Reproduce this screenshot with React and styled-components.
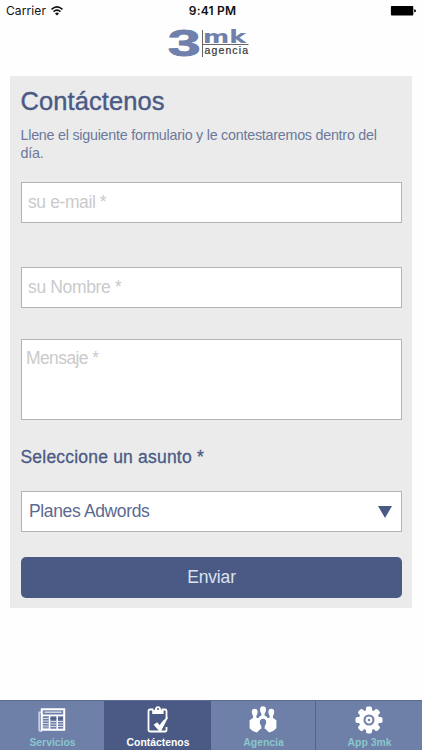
import React from "react";
import styled, { createGlobalStyle } from "styled-components";

const GlobalStyle = createGlobalStyle`
    * {
        box-sizing: border-box;
    }
    body {
        margin: 0;
        background: #fff;
        font-family: "Liberation Sans", Arial, sans-serif;
    }
`;

const Screen = styled.div`
    display: flex;
    flex-direction: column;
    width: 422px;
    height: 750px;
    overflow: hidden;
    background: #fefefe;
`;

const StatusBar = styled.div`
    display: grid;
    grid-template-columns: 1fr auto 1fr;
    align-items: center;
    height: 21px;
    padding: 0 5px 0 6px;
    font-family: Inter, sans-serif;
    font-size: 12px;
    color: #111;
`;

const Carrier = styled.div`
    display: flex;
    align-items: center;
    gap: 5px;
    letter-spacing: 0.1px;
`;

const Time = styled.div`
    padding-left: 2px;
    font-weight: 600;
    letter-spacing: 0.2px;
`;

const Battery = styled.svg`
    justify-self: end;
`;

const Header = styled.header`
    display: flex;
    justify-content: center;
    height: 55px;
    padding: 1px 4px 0 0;
`;

const Form = styled.form`
    display: flex;
    flex-direction: column;
    width: 402px;
    height: 532px;
    margin-left: 10px;
    padding: 0 10px 0 11px;
    background: #ebebeb;
`;

const Title = styled.h1`
    margin: 10px 0 0 -0.5px;
    font-size: 25.5px;
    line-height: 30px;
    font-weight: 400;
    letter-spacing: 0.08px;
    color: #4a5a85;
    -webkit-text-stroke: 0.4px #4a5a85;
`;

const Intro = styled.p`
    margin: 10px 0 20px -0.5px;
    font-size: 14.3px;
    line-height: 18px;
    letter-spacing: -0.24px;
    color: #6b799b;
`;

const field = `
    display: block;
    width: 381px;
    margin: 0;
    border: 1px solid #b3b3b3;
    border-radius: 0;
    outline: 0;
    background: #fff;
    font-family: "Liberation Sans", Arial, sans-serif;
    font-size: 17.5px;
    &::placeholder {
        color: #cacacc;
        opacity: 1;
    }
`;

const Input = styled.input`
    ${field}
    height: 41px;
    padding: 0 6px;
    margin-bottom: ${props => props.$gap}px;
    letter-spacing: ${props => props.$spacing}px;
`;

const Message = styled.textarea`
    ${field}
    height: 81px;
    padding: 8px 4px;
    line-height: 20px;
    letter-spacing: -0.6px;
    resize: none;
`;

const Label = styled.label`
    margin: 26px 0 23px -0.5px;
    font-size: 17.5px;
    line-height: 22px;
    letter-spacing: 0.2px;
    color: #4a5a85;
    -webkit-text-stroke: 0.3px #4a5a85;
`;

const Select = styled.button`
    ${field}
    display: flex;
    align-items: center;
    justify-content: space-between;
    height: 41px;
    padding: 0 9px 0 7px;
    letter-spacing: -0.36px;
    color: #5b6a91;
`;

const Submit = styled.button`
    height: 41px;
    margin-top: 25px;
    padding: 0;
    border: 0;
    border-radius: 5px;
    background: #4a5a85;
    font-family: "Liberation Sans", Arial, sans-serif;
    font-size: 17.5px;
    letter-spacing: -0.15px;
    color: #dbe3f1;
`;

const TabBar = styled.nav`
    display: grid;
    grid-template-columns: 104px 107px 105px 106px;
    height: 50px;
    margin-top: auto;
    background: #6e7fa8;
`;

const Tab = styled.a`
    display: flex;
    flex-direction: column;
    align-items: center;
    padding: 5px 0 0 1px;
    border-top: 1px solid #5c6c96;
    border-right: ${props => props.$divider ? "1px solid #53638e" : "0"};
    background: ${props => props.$active ? "#4a5a85" : "#6e7fa8"};
    color: ${props => props.$active ? "#fff" : "#8ac7cb"};
    font-size: 10.4px;
    line-height: 13px;
    font-weight: 700;
    svg {
        margin: 0 1px 2px 0;
    }
`;

const Logo = () => (
    <svg width="82" height="46" viewBox="168 22 82 46">
        <g fontWeight="700" fill="#6e80ab" stroke="#6e80ab">
            <text transform="translate(167.8 56.3) scale(1.6 1)" fontFamily="Liberation Sans" fontSize="37" strokeWidth="0.8">3</text>
            <text transform="translate(203 43) scale(1.44 1)" fontFamily="DejaVu Sans" fontSize="17.5" strokeWidth="0.1">mk</text>
        </g>
        <path d="M202.5 30v27M202.5 44.5h46" stroke="#666" fill="none" />
        <text x="204.5" y="54.3" fontFamily="Liberation Sans" fontSize="10.5" textLength="43.5" fill="#333" stroke="#333" strokeWidth="0.2">agencia</text>
    </svg>
);

const Wifi = () => (
    <svg width="12" height="10" viewBox="0 0 12 10" fill="none" stroke="#111" strokeWidth="1.6">
        <path d="M.5 3.3Q6-1.5 11.5 3.3M2.5 5.6Q6 2.6 9.5 5.6" />
        <path d="M4 7.4Q6 5.8 8 7.4L6 9.5Z" fill="#111" stroke="none" />
    </svg>
);

const NewsIcon = () => (
    <svg width="28" height="28" viewBox="0 0 28 28" fill="none" stroke="#fff">
        <path d="M3 6.5H1.2V24q0 1 1.5 1H4" stroke="#c5cde0" strokeWidth="1.8" />
        <path d="M3.8 3.2h22.4v20.6H3.8z" strokeWidth="2" />
        <path d="M6.5 6.2h17" stroke="#d5dbe9" strokeWidth="1.4" />
        <path d="M4 9.4h22M11.6 9.5v14M19.2 9.5v14" strokeWidth="1.6" />
        <path d="M5 12.5h6M5 15h6M5 17.5h6M5 20h6M5 22.2h6M12.5 15.5h6M12.5 18h6M12.5 20.5h6M20 15.5h6M20 18h6M20 20.5h6" stroke="#d5dbe9" strokeWidth="1.1" />
        <path d="M12.5 11.5h5.8v2h-5.8zM20 11.5h5v2h-5z" fill="#4a5a85" stroke="none" />
    </svg>
);

const ClipboardIcon = () => (
    <svg width="28" height="28" viewBox="0 0 28 28">
        <path d="M9.5 3.5H6q-1.5 0-1.5 1.5v19q0 1.5 1.5 1.5h15.5q1 0 1-1.5v-3M17.5 3.5H21q1.5 0 1.5 1.5v8" fill="none" stroke="#fff" strokeWidth="1.8" />
        <path d="M8.2 8V4h2.6q.2-3.8 3.2-3.8T17 4h2.6v4z" fill="#fff" />
        <circle cx="14" cy="3" r="1" fill="#4a5a85" />
        <path d="M9.6 18.8l3.600-2.6 2.6 3q3-5.4 8.600-8.400-3 6.2-8 15.600Z" fill="#fff" />
    </svg>
);

const PeopleIcon = () => (
    <svg width="28" height="28" viewBox="0 0 28 28" fill="#fff">
        <path d="M14 .2q3 0 3 3.4 0 2.4-1.4 4V10h-3.2V7.600Q11 6 11 3.600 11 .2 14 .2z" />
        <path d="M5.7 2.8q2.9 0 2.9 3.3 0 2.3-1.3 3.8V13H4.1V9.900Q2.8 8.400 2.8 6.1q0-3.3 2.9-3.3zM22.3 2.8q2.9 0 2.9 3.3 0 2.3-1.3 3.8V13h-3.200V9.900q-1.300-1.500-1.300-3.800 0-3.300 2.900-3.300z" />
        <path d="M.6 14.2l3.900-2.700h2.800l1.900.8q1.200-2.400 3.300-2.900h3q2.100.5 3.300 2.900l1.900-.8h2.800l3.900 2.700v8.100q-2.600 3.300-7.400 4.100l-3.400-3.400h-5.200L8 26.400Q3.200 25.600.6 22.300z" />
        <path d="M10.800 16.300q0-3.600 3.200-3.600t3.200 3.600q0 2-1.500 3.600v3.300h-3.400v-3.300q-1.500-1.600-1.500-3.600z" fill="#6e7fa8" />
    </svg>
);

const GearIcon = () => (
    <svg width="28" height="28" viewBox="0 0 28 28">
        {[0, 45, 90, 135].map(angle => (
            <rect key={angle} x="11" y="0.5" width="6" height="27" rx="1.8" fill="#fff" transform={`rotate(${angle} 14 14)`} />
        ))}
        <circle cx="14" cy="14" r="10.3" fill="#fff" />
        <circle cx="14" cy="14" r="4.5" fill="#fff" stroke="#6e7fa8" strokeWidth="2.1" />
        <circle cx="14" cy="14" r="1.2" fill="#6e7fa8" />
    </svg>
);

const App = () => {
    return (
        <Screen>
            <GlobalStyle />
            <StatusBar>
                <Carrier>Carrier <Wifi /></Carrier>
                <Time>9:41 PM</Time>
                <Battery width="27" height="12" viewBox="0 0 27 12">
                    <rect x="0.9" y="1" width="22.4" height="9.6" rx="1" />
                    <path d="M24.2 4.3q1.8 0 1.8 1.5t-1.8 1.5z" />
                </Battery>
            </StatusBar>
            <Header>
                <Logo />
            </Header>
            <Form onSubmit={e => e.preventDefault()}>
                <Title>Contáctenos</Title>
                <Intro>Llene el siguiente formulario y le contestaremos dentro del día.</Intro>
                <Input type="email" placeholder="su e-mail *" $gap={44} $spacing={-0.4} />
                <Input type="text" placeholder="su Nombre *" $gap={31} $spacing={-0.35} />
                <Message placeholder="Mensaje *" />
                <Label>Seleccione un asunto *</Label>
                <Select type="button">
                    Planes Adwords
                    <svg width="14" height="12" viewBox="0 0 14 12" fill="#4a5a85">
                        <path d="M0 0h14L7 12z" />
                    </svg>
                </Select>
                <Submit>Enviar</Submit>
            </Form>
            <TabBar>
                <Tab><NewsIcon />Servicios</Tab>
                <Tab $active><ClipboardIcon />Contáctenos</Tab>
                <Tab $divider><PeopleIcon />Agencia</Tab>
                <Tab><GearIcon />App 3mk</Tab>
            </TabBar>
        </Screen>
    )
}
export default App;
